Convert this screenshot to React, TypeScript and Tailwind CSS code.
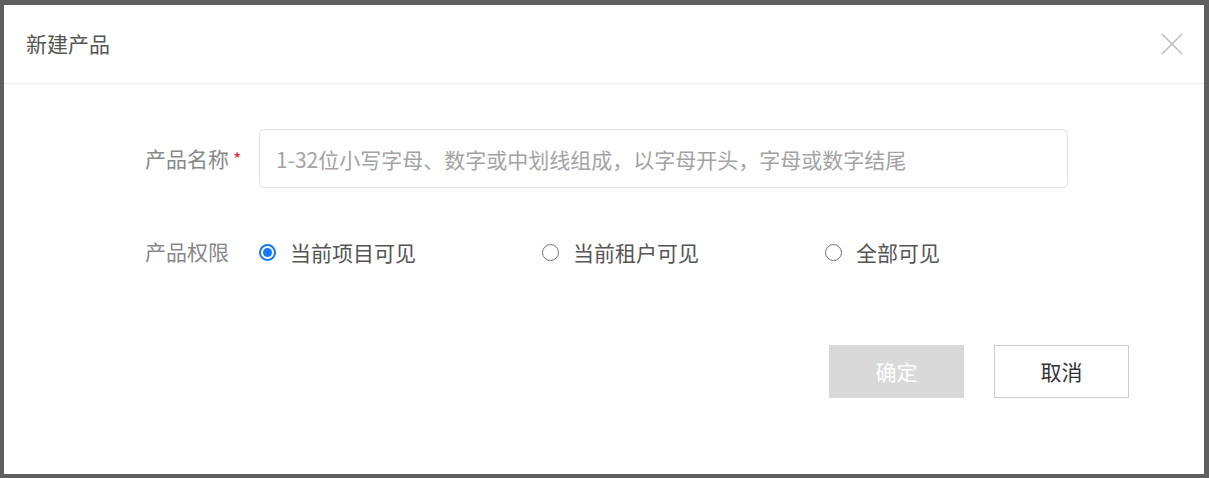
import { useState } from "react"

const font = { fontFamily: '"Noto Sans CJK SC", "Noto Sans", sans-serif' }

function Radio({
  label,
  checked,
  onClick,
}: {
  label: string
  checked: boolean
  onClick: () => void
}) {
  return (
    <label
      onClick={onClick}
      className="flex w-[283px] shrink-0 cursor-pointer items-center"
    >
      {checked ? (
        <span className="flex h-[17px] w-[17px] shrink-0 items-center justify-center rounded-full border-[2px] border-[#1677ff] bg-white">
          <span className="h-[9px] w-[9px] rounded-full bg-[#1677ff]" />
        </span>
      ) : (
        <span className="h-[17px] w-[17px] shrink-0 rounded-full border-[1.5px] border-[#707070] bg-white" />
      )}
      <span className="ml-[14px] text-[21px] leading-none text-[#555]">
        {label}
      </span>
    </label>
  )
}

export default function App() {
  const [scope, setScope] = useState("project")

  const options = [
    { key: "project", label: "当前项目可见" },
    { key: "tenant", label: "当前租户可见" },
    { key: "all", label: "全部可见" },
  ]

  return (
    <div
      style={font}
      className="flex h-[478px] w-full bg-[#5f5f5f] pb-[4px] pl-[4px] pr-[5px] pt-[5px]"
    >
      <div className="flex min-w-0 flex-1 flex-col bg-white">

        <div className="flex h-[79px] items-center justify-between border-b border-[#efefef] pl-[22px] pr-[20px]">
          <h1 className="text-[21px] font-normal text-[#555]">
            新建产品
          </h1>
          <button className="flex h-[24px] w-[24px] items-center justify-center">
            <svg width="22" height="22" viewBox="0 0 22 22">
              <path
                d="M1 1L21 21M21 1L1 21"
                stroke="#bdbdbd"
                strokeWidth="1.6"
                fill="none"
              />
            </svg>
          </button>
        </div>

        <div className="flex min-w-0 flex-1 flex-col pl-[141px] pr-[136px] pt-[45px]">

          <div className="flex h-[59px] items-center">
            <div className="flex w-[114px] shrink-0 items-center text-[21px] text-[#888]">
              产品名称
              <span className="ml-[4px] text-[18px] text-[#f5222d]">*</span>
            </div>
            <input
              placeholder="1-32位小写字母、数字或中划线组成，以字母开头，字母或数字结尾"
              className="h-[59px] w-0 min-w-0 flex-1 rounded-[5px] border border-[#e1e3ea] px-[16px] text-[21px] text-[#333] outline-none placeholder:text-[#a3a3a3]"
            />
          </div>

          <div className="mt-[44px] flex h-[40px] items-center">
            <div className="w-[114px] shrink-0 text-[21px] text-[#888]">
              产品权限
            </div>
            {options.map((o) => (
              <Radio
                key={o.key}
                label={o.label}
                checked={scope === o.key}
                onClick={() => setScope(o.key)}
              />
            ))}
          </div>

          <div className="-mr-[61px] mt-[73px] flex justify-end gap-[30px]">
            <button className="h-[53px] w-[135px] bg-[#d9d9d9] text-[21px] text-white">
              确定
            </button>
            <button className="h-[53px] w-[135px] border border-[#cccccc] bg-white text-[21px] text-[#333]">
              取消
            </button>
          </div>

        </div>
      </div>
    </div>
  )
}
